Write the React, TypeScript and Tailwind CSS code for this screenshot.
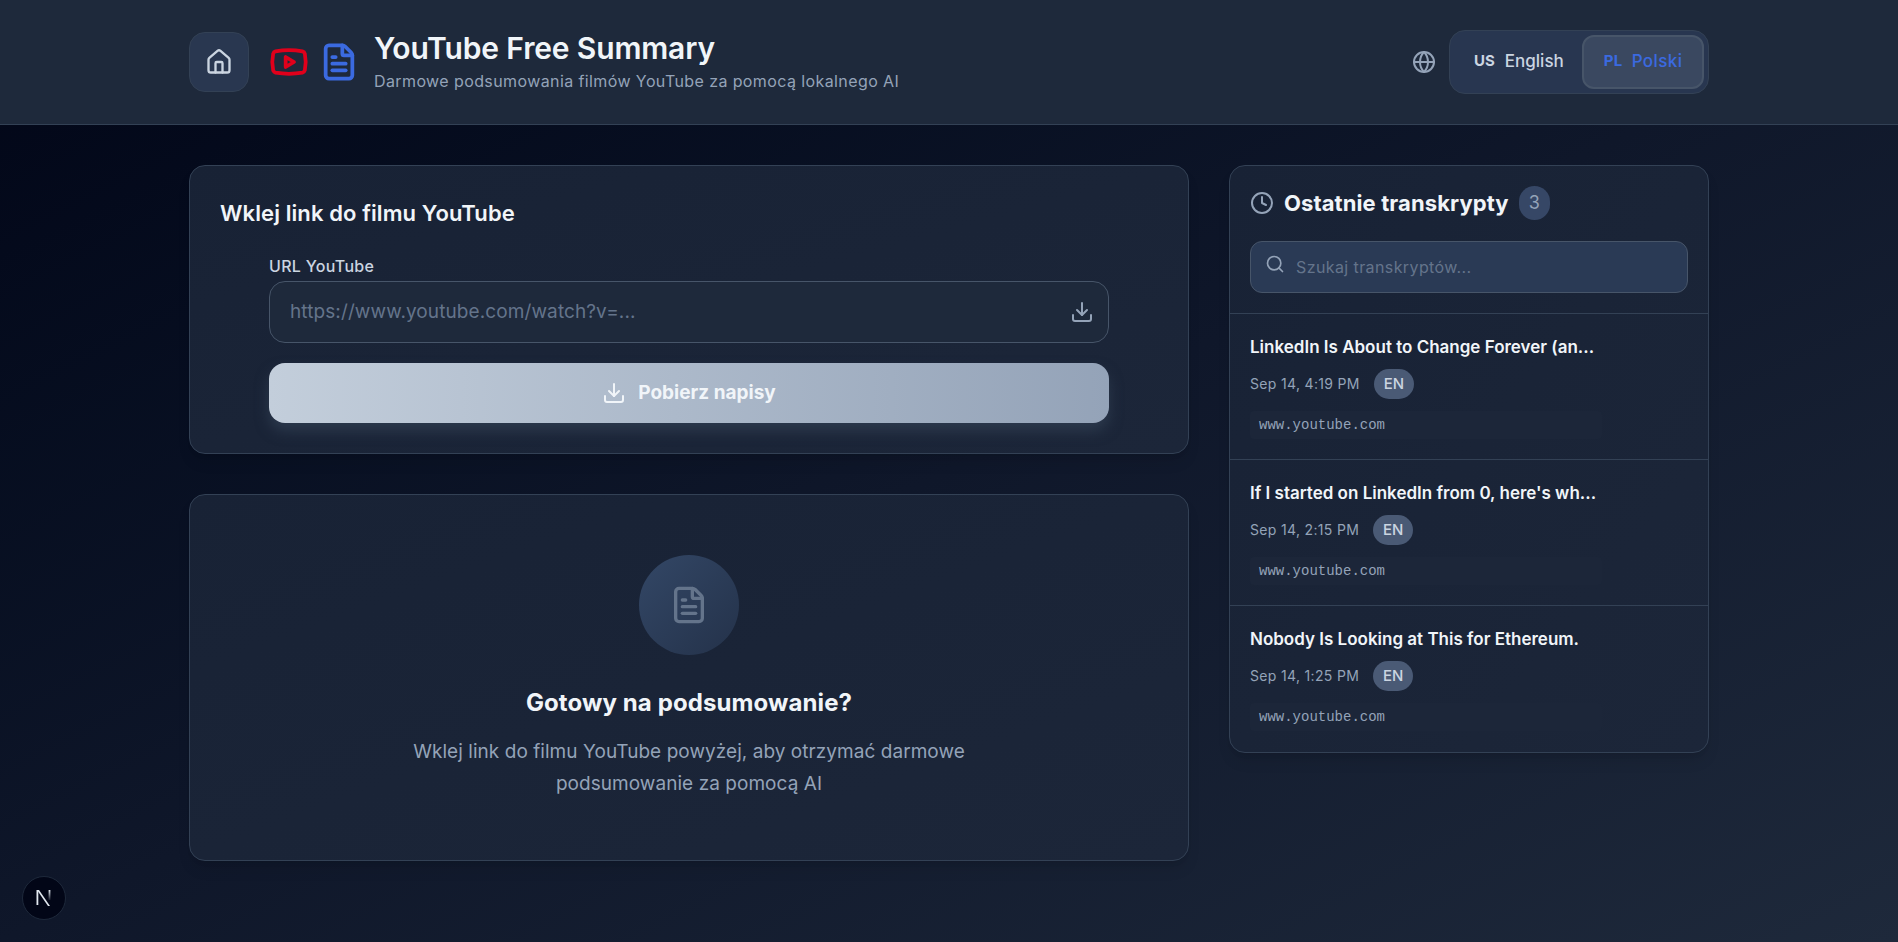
import { Clock, Download, FileText, Globe, Home, Search, Youtube } from 'lucide-react';

const RECENT_ITEMS = [
  { title: 'LinkedIn Is About to Change Forever (an...', date: 'Sep 14, 4:19 PM' },
  { title: "If I started on LinkedIn from 0, here's wh...", date: 'Sep 14, 2:15 PM' },
  { title: 'Nobody Is Looking at This for Ethereum.', date: 'Sep 14, 1:25 PM' },
];

function Header() {
  return (
    <header className="h-[125px] border-b border-[#334155] bg-[#1e293b]">
      <div className="mx-auto flex h-full w-[1520px] items-center justify-between pb-px">
        <div className="flex items-center">
          <div className="flex h-[60px] w-[60px] items-center justify-center rounded-2xl border border-[#334155] bg-[#293750]">
            <Home className="h-7 w-7 text-[#cbd5e1]" strokeWidth={2} />
          </div>
          <Youtube className="ml-[20px] h-10 w-10 text-[#e0001b]" strokeWidth={2.25} />
          <FileText className="ml-[10px] h-10 w-10 text-[#3b6ae0]" strokeWidth={2.25} />
          <div className="ml-[15px]">
            <h1 className="text-[30px] leading-9 font-semibold tracking-[-0.15px] text-[#f1f5f9]">YouTube Free Summary</h1>
            <p className="mt-[3px] text-base leading-6 tracking-[0.4px] text-[#94a3b8]">
              Darmowe podsumowania filmów YouTube za pomocą lokalnego AI
            </p>
          </div>
        </div>
        <div className="flex items-center gap-[13px]">
          <Globe className="h-6 w-6 text-[#94a3b8]" strokeWidth={2} />
          <div className="flex h-[64px] w-[260px] items-center justify-between rounded-2xl border border-[#334155] bg-[#283650] p-1">
            <div className="flex items-center gap-[10px] pl-[20px] text-[17px] font-medium text-[#cbd5e1]">
              <span className="text-[15px] font-bold">US</span>
              <span>English</span>
            </div>
            <div className="flex h-[54px] w-[122px] items-center justify-center gap-[9px] rounded-xl border-2 border-[#475569] bg-[#3a4860] text-[17px] font-medium tracking-[0.4px] text-[#3b6ae0]">
              <span className="text-[15px] font-bold">PL</span>
              <span>Polski</span>
            </div>
          </div>
        </div>
      </div>
    </header>
  );
}

function UrlCard() {
  return (
    <section className="h-[289px] rounded-2xl border border-[#334155] bg-gradient-to-br from-[#182235] to-[#1c2639] px-[30px] pt-[33px] shadow-lg">
      <h2 className="text-[22px] leading-7 font-semibold tracking-[0.1px] text-[#f1f5f9]">Wklej link do filmu YouTube</h2>
      <div className="mt-[27px] px-[49px]">
        <label className="block text-base leading-6 font-medium tracking-[0.3px] text-[#cbd5e1]">URL YouTube</label>
        <div className="mt-[3px] flex h-[62px] items-center justify-between rounded-2xl border border-[#475569] bg-[#1e293b] pr-[14px] pl-5">
          <span className="text-[19px] tracking-[0.1px] text-[#64748b]">https://www.youtube.com/watch?v=...</span>
          <Download className="h-6 w-6 text-[#94a3b8]" strokeWidth={2} />
        </div>
        <div className="mt-[20px] flex h-[60px] items-center justify-center gap-3 rounded-2xl bg-gradient-to-r from-[#c3cedb] to-[#94a3b8] text-[19px] font-bold text-[#f1f5f9] shadow-[0_8px_14px_rgba(51,65,85,0.7)]">
          <Download className="h-6 w-6" strokeWidth={2} />
          <span>Pobierz napisy</span>
        </div>
      </div>
    </section>
  );
}

function EmptyCard() {
  return (
    <section className="mt-[40px] flex h-[367px] flex-col items-center rounded-2xl border border-[#334155] bg-gradient-to-br from-[#182235] to-[#1c2639] pt-[60px] text-center shadow-lg">
      <div className="flex h-[100px] w-[100px] items-center justify-center rounded-full bg-gradient-to-br from-[#334766] to-[#24324a]">
        <FileText className="h-10 w-10 text-[#64748b]" strokeWidth={2} />
      </div>
      <h3 className="mt-[32px] text-2xl leading-8 font-bold tracking-[0.1px] text-[#f1f5f9]">Gotowy na podsumowanie?</h3>
      <p className="mt-[17px] w-[570px] text-[19px] leading-8 tracking-[0.05px] text-[#94a3b8]">
        Wklej link do filmu YouTube powyżej, aby otrzymać darmowe podsumowanie za pomocą AI
      </p>
    </section>
  );
}

function RecentList() {
  return (
    <aside className="w-[480px] overflow-hidden rounded-2xl border border-[#334155] bg-gradient-to-br from-[#182235] to-[#1c2639] shadow-lg">
      <div className="border-b border-[#334155] px-5 pt-[20px] pb-[20px]">
        <div className="flex h-[34px] items-center">
          <Clock className="h-6 w-6 text-[#94a3b8]" strokeWidth={2} />
          <h2 className="ml-[10px] text-[22px] leading-7 font-bold tracking-[0.1px] text-[#f1f5f9]">Ostatnie transkrypty</h2>
          <span className="ml-[10px] flex h-[34px] w-[31px] items-center justify-center rounded-full bg-[#364766] text-lg text-[#94a3b8]">
            3
          </span>
        </div>
        <div className="mt-[21px] flex h-[52px] items-center rounded-xl border border-[#475569] bg-[#2a3a55] px-[14px]">
          <Search className="mb-[6px] h-5 w-5 text-[#94a3b8]" strokeWidth={2} />
          <span className="ml-[11px] text-base tracking-[0.4px] text-[#64748b]">Szukaj transkryptów...</span>
        </div>
      </div>
      {RECENT_ITEMS.map((item, index) => (
        <div
          key={item.date}
          className={`h-[146px] px-5 pt-[21px] ${index < RECENT_ITEMS.length - 1 ? 'border-b border-[#334155]' : ''}`}
        >
          <h4 className="text-[17px] leading-6 font-semibold text-[#f1f5f9]">{item.title}</h4>
          <div className="mt-[10px] flex items-center gap-[14px]">
            <span className="text-sm tracking-[0.33px] text-[#94a3b8]">{item.date}</span>
            <span className="flex h-[30px] w-10 items-center justify-center rounded-full bg-[#4a5a75] text-[15px] font-medium text-[#cbd5e1]">
              EN
            </span>
          </div>
          <div className="mt-[12px] w-[352px] rounded bg-[#1c2639] px-[9px] py-[5px] font-['Liberation_Mono',monospace] text-sm leading-[18px] text-[#94a3b8]">
            www.youtube.com
          </div>
        </div>
      ))}
    </aside>
  );
}

function NextLogo() {
  return (
    <svg viewBox="0 0 18 18" className="h-[18px] w-[18px]" fill="none">
      <defs>
        <linearGradient id="n-fade-a" x1="0" y1="0" x2="0" y2="1">
          <stop offset="0" stopColor="#e2e8f0" />
          <stop offset="1" stopColor="#e2e8f0" stopOpacity="0.1" />
        </linearGradient>
      </defs>
      <rect x="1.5" y="1" width="1.8" height="15" fill="#e2e8f0" />
      <path d="M2 1h2l11 16h-2z" fill="#e2e8f0" />
      <rect x="13.6" y="1" width="1.8" height="10" fill="url(#n-fade-a)" />
    </svg>
  );
}

export default function App() {
  return (
    <div className="relative min-h-[942px] bg-gradient-to-br from-[#020617] via-[#0f172a] to-[#1e293b] font-['Inter',sans-serif]">
      <Header />
      <main className="mx-auto flex w-[1520px] items-start gap-[40px] pt-[40px]">
        <div className="w-[1000px]">
          <UrlCard />
          <EmptyCard />
        </div>
        <RecentList />
      </main>
      <div className="absolute bottom-[22px] left-[22px] flex h-11 w-11 items-center justify-center rounded-full border border-[#1e293b] bg-[#020617]">
        <NextLogo />
      </div>
    </div>
  );
}
